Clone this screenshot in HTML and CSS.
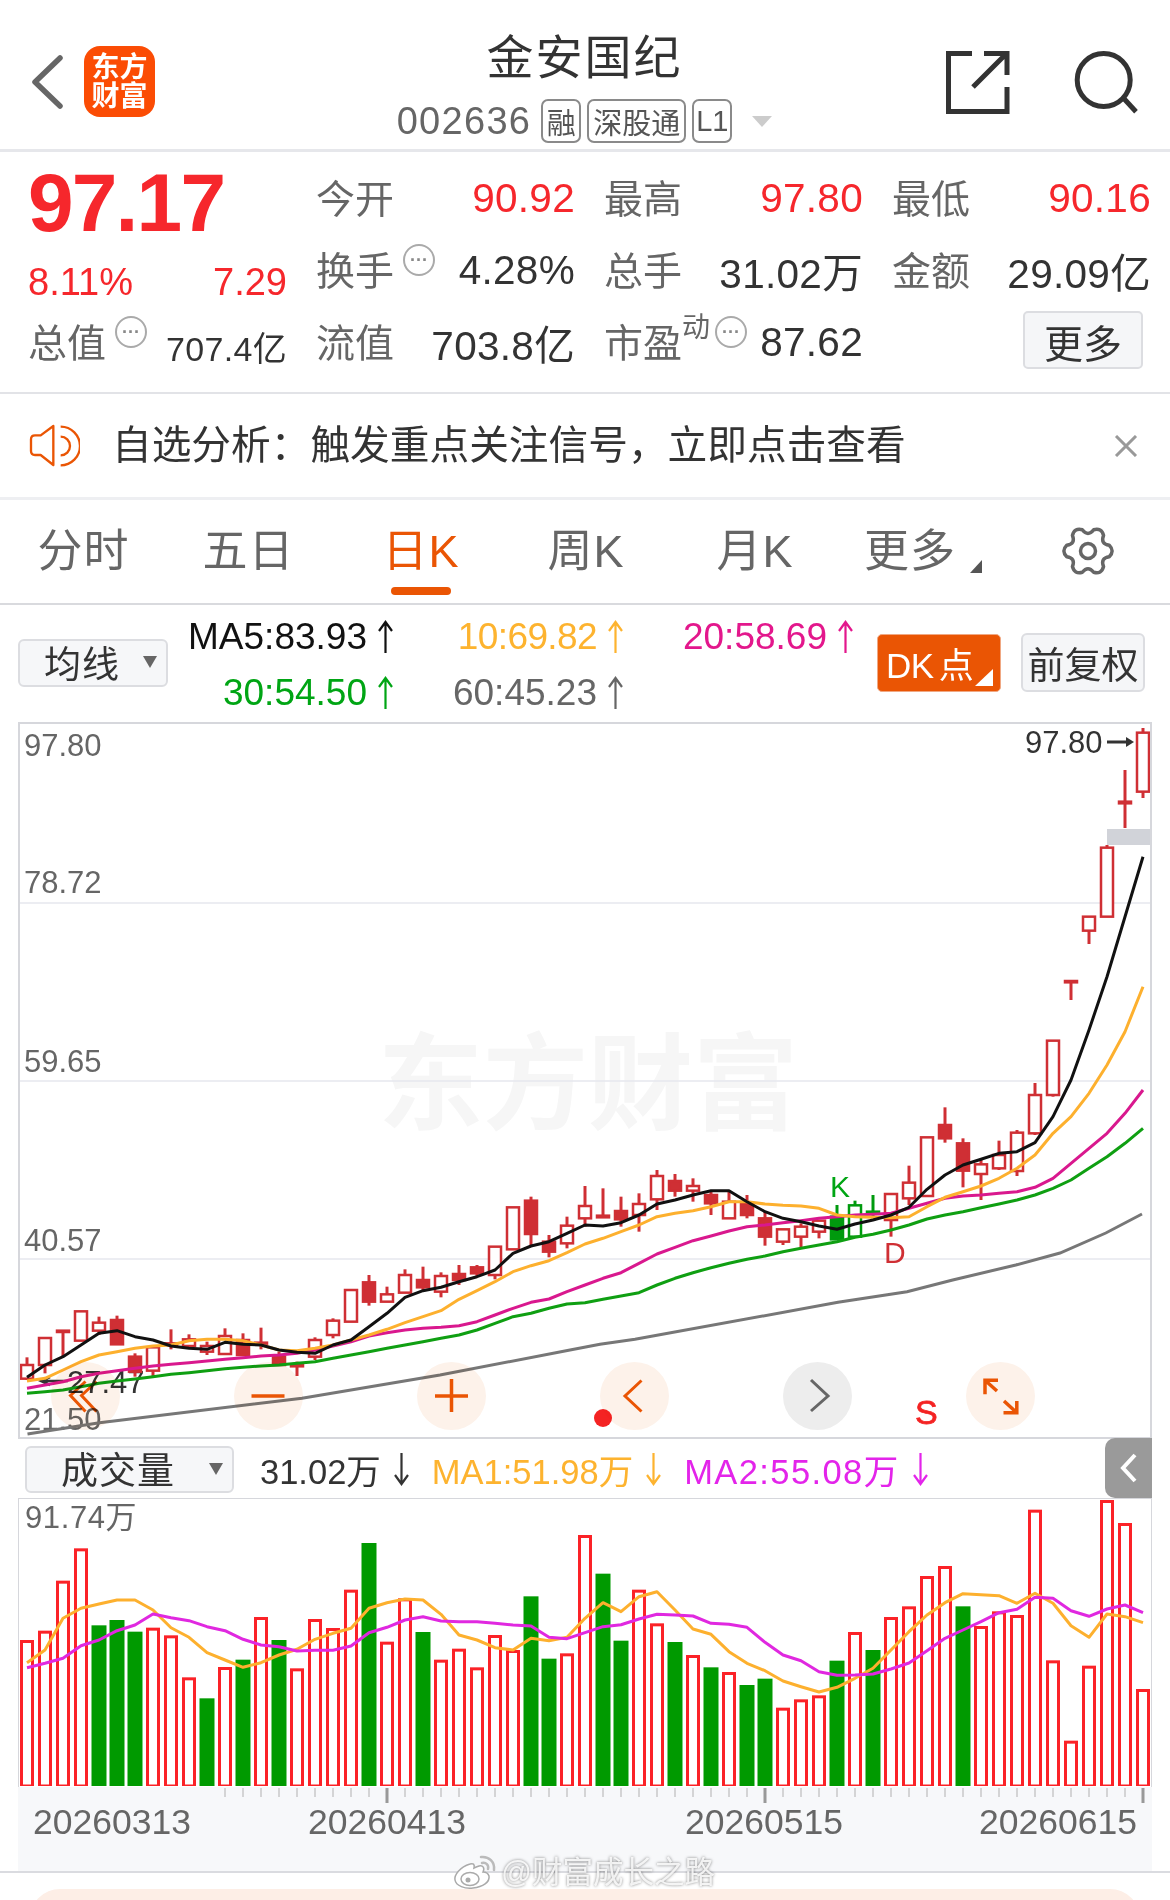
FILE: index.html
```html
<!DOCTYPE html>
<html lang="zh-CN">
<head>
<meta charset="UTF-8">
<title>金安国纪 002636</title>
<link rel="stylesheet" href="styles.css">
</head>
<body>
<svg class="defs" width="0" height="0">
    <symbol id="arrow-up" viewBox="0 0 17 34">
        <path d="M8.5 33V2M2 11L8.5 2L15 11" fill="none" stroke="currentColor" stroke-width="2.2"/>
    </symbol>
</svg>

<header class="top-bar">
    <div class="top-left">
        <svg class="back-icon" width="34" height="56" viewBox="0 0 34 56">
            <path d="M29 4L4 28L29 52" fill="none" stroke="#666" stroke-width="5.5" stroke-linecap="round" stroke-linejoin="round"/>
        </svg>
        <div class="logo"><span>东方</span><span>财富</span></div>
    </div>
    <div class="top-center">
        <h1 class="stock-name">金安国纪</h1>
        <div class="stock-sub">
            <span class="stock-code">002636</span>
            <span class="tag">融</span>
            <span class="tag tag-wide">深股通</span>
            <span class="tag">L1</span>
            <span class="sub-caret"></span>
        </div>
    </div>
    <div class="top-right">
        <svg width="64" height="64" viewBox="0 0 64 64">
            <path d="M26 2.5H2.5V60.5H61V36M38 2.5H61V24M27 36L60 3" fill="none" stroke="#333" stroke-width="5"/>
        </svg>
        <svg width="64" height="64" viewBox="0 0 64 64">
            <circle cx="29.7" cy="29" r="26.5" fill="none" stroke="#333" stroke-width="5"/>
            <path d="M48.7 46.3L62 60.7" stroke="#333" stroke-width="5"/>
        </svg>
    </div>
</header>

<section class="quote">
    <div class="cell price">97.17</div>
    <div class="cell"><span class="label">今开</span><span class="up">90.92</span></div>
    <div class="cell"><span class="label">最高</span><span class="up">97.80</span></div>
    <div class="cell"><span class="label">最低</span><span class="up">90.16</span></div>

    <div class="cell change up"><span>8.11%</span><span>7.29</span></div>
    <div class="cell"><span class="label">换手<i class="more-dot">···</i></span><span>4.28%</span></div>
    <div class="cell"><span class="label">总手</span><span>31.02万</span></div>
    <div class="cell"><span class="label">金额</span><span>29.09亿</span></div>

    <div class="cell"><span class="label">总值<i class="more-dot">···</i></span><span class="small-value">707.4亿</span></div>
    <div class="cell"><span class="label">流值</span><span>703.8亿</span></div>
    <div class="cell"><span class="label">市盈<sup>动</sup><i class="more-dot dot-tight">···</i></span><span>87.62</span></div>
    <div class="cell cell-end"><button class="more-btn">更多</button></div>
</section>

<section class="notice">
    <svg width="60" height="60" viewBox="0 0 180 180">
        <path d="M100 30L62 58H45Q33 58 33 70V105Q33 117 45 117H62L100 147Z" fill="none" stroke="#ea5504" stroke-width="7" stroke-linejoin="round"/>
        <path d="M122 62A28 28 0 0 1 122 118M122 32A58 58 0 0 1 122 148" fill="none" stroke="#ea5504" stroke-width="7"/>
    </svg>
    <p class="notice-text">自选分析：触发重点关注信号，立即点击查看</p>
    <svg class="notice-close" width="24" height="22" viewBox="0 0 24 22">
        <path d="M2 1L22 21M22 1L2 21" stroke="#999" stroke-width="3"/>
    </svg>
</section>

<nav class="tabs">
    <a class="tab">分时</a>
    <a class="tab">五日</a>
    <a class="tab active">日K</a>
    <a class="tab">周K</a>
    <a class="tab">月K</a>
    <a class="tab tab-more">更多<i class="corner"></i></a>
    <svg class="gear" width="60" height="60" viewBox="0 0 60 60">
        <path d="M51.25 35.69Q57 30 51.25 24.31Q42.12 23 45.56 14.44Q43.5 6.62 35.69 8.75Q30 16 24.31 8.75Q16.5 6.62 14.44 14.44Q17.88 23 8.75 24.31Q3 30 8.75 35.69Q17.88 37 14.44 45.56Q16.5 53.38 24.31 51.25Q30 44 35.69 51.25Q43.5 53.38 45.56 45.56Q42.12 37 51.25 35.69Z" fill="none" stroke="#666" stroke-width="3.5" stroke-linejoin="round"/>
        <circle cx="30" cy="30" r="7.5" fill="none" stroke="#666" stroke-width="3.5"/>
    </svg>
</nav>

<section class="ma-row">
    <div class="select select-ma">均线<i class="caret"></i></div>
    <div class="ma-grid">
        <span class="ma c-black">MA5:83.93<svg class="arrow"><use href="#arrow-up"/></svg></span>
        <span class="ma c-orange">10:69.82<svg class="arrow"><use href="#arrow-up"/></svg></span>
        <span class="ma c-pink">20:58.69<svg class="arrow"><use href="#arrow-up"/></svg></span>
        <span class="ma c-green">30:54.50<svg class="arrow"><use href="#arrow-up"/></svg></span>
        <span class="ma c-grey">60:45.23<svg class="arrow"><use href="#arrow-up"/></svg></span>
    </div>
    <button class="dk-btn">DK 点<i class="dk-corner"></i></button>
    <button class="adjust-btn">前复权</button>
</section>

<section class="price-chart">
    <svg id="priceSvg" width="1130" height="713" viewBox="20 724 1130 713">
        <text class="watermark" x="378" y="1121">东方财富</text>
        <path d="M20 903H1150M20 1081H1150M20 1259H1150" stroke="#e6e8ee" stroke-width="1.5"/>
        <g class="axis-text">
            <text x="24" y="756">97.80</text>
            <text x="24" y="893">78.72</text>
            <text x="24" y="1072">59.65</text>
            <text x="24" y="1251">40.57</text>
            <text x="24" y="1430">21.50</text>
        </g>
        <g class="mark-low">
            <path d="M68 1381H42M50 1377L41 1381L50 1385" fill="none" stroke="#333" stroke-width="2.5"/>
            <text x="67" y="1393">27.47</text>
        </g>
        <g id="priceMarks">
            <rect x="1107" y="829" width="44" height="16" fill="#d1d3d9"/>
            <g class="mark-high">
                <text x="1025" y="753">97.80</text>
                <path d="M1107 742H1128" stroke="#333" stroke-width="3"/>
                <path d="M1126 737L1134 742L1126 747Z" fill="#333"/>
            </g>
            <text class="mark-k" x="830" y="1197">K</text>
            <text class="mark-d" x="884" y="1263">D</text>
            <text class="mark-s" x="915" y="1424">S</text>
            <circle cx="603" cy="1418" r="9" fill="#f42323"/>
        </g>
    </svg>
    <div class="chart-controls">
        <div class="round-btn">
            <svg width="69" height="68" viewBox="0 0 69 68"><path d="M34.5 19.5L19.5 33.5L34.5 49.5M45.5 19.5L30.5 33.5L45.5 49.5" fill="none" stroke="#ea5504" stroke-width="3"/></svg>
        </div>
        <div class="round-btn">
            <svg width="69" height="68" viewBox="0 0 69 68"><path d="M17.5 34H50.5" stroke="#ea5504" stroke-width="3.5"/></svg>
        </div>
        <div class="round-btn">
            <svg width="69" height="68" viewBox="0 0 69 68"><path d="M18 34H51M34.5 17V50" stroke="#ea5504" stroke-width="3.5"/></svg>
        </div>
        <div class="round-btn">
            <svg width="69" height="68" viewBox="0 0 69 68"><path d="M41.5 18.5L25 34L41.5 49.5" fill="none" stroke="#ea5504" stroke-width="3"/></svg>
        </div>
        <div class="round-btn round-grey">
            <svg width="69" height="68" viewBox="0 0 69 68"><path d="M28 18L45 34L28 49" fill="none" stroke="#666" stroke-width="3"/></svg>
        </div>
        <div class="round-btn">
            <svg width="69" height="68" viewBox="0 0 69 68"><path d="M32 18.3H19V32.3M19 18.3L31 29M37.5 50.7H50.8V39M50.8 50.7L38 39" fill="none" stroke="#ea5504" stroke-width="3.5"/></svg>
        </div>
    </div>
</section>

<section class="vol-row">
    <div class="select select-vol">成交量<i class="caret"></i></div>
    <span class="vol-item c-dark">31.02万<svg class="arrow arrow-down"><use href="#arrow-up"/></svg></span>
    <span class="vol-item c-orange">MA1:51.98万<svg class="arrow arrow-down"><use href="#arrow-up"/></svg></span>
    <span class="vol-item vol-wide c-purple">MA2:55.08万<svg class="arrow arrow-down"><use href="#arrow-up"/></svg></span>
    <div class="collapse-tab">
        <svg width="18" height="32" viewBox="0 0 18 32"><path d="M15 3L3 16L15 29" fill="none" stroke="#fff" stroke-width="4"/></svg>
    </div>
</section>

<section class="vol-chart">
    <svg id="volSvg" width="1132" height="287" viewBox="19 1499 1132 287">
        <text class="axis-text vol-label" x="25" y="1528">91.74万</text>
    </svg>
</section>

<div class="date-row">
    <svg id="dateSvg" class="date-axis" width="1134" height="84" viewBox="18 1786 1134 84">
        <g class="date-text">
            <text x="112" y="1833">20260313</text>
            <text x="387" y="1833">20260413</text>
            <text x="764" y="1833">20260515</text>
            <text x="1058" y="1833">20260615</text>
        </g>
    </svg>
</div>

<div class="promo"></div>

<div class="weibo-mark">
    <svg width="46" height="36" viewBox="0 0 46 36">
        <path d="M18 10C8 13 2 21 3 26C4 32 13 35 21 34C31 33 38 28 37 22C36 19 33 18 31 18C33 14 31 11 27 12C24 13 22 14 22 14C23 10 21 9 18 10Z" fill="#fff" stroke="#aaa" stroke-width="1.5"/>
        <ellipse cx="18" cy="25" rx="9" ry="6.5" fill="none" stroke="#aaa" stroke-width="1.5"/>
        <circle cx="16" cy="26" r="2.5" fill="#aaa"/>
        <path d="M29 3C37 2 43 8 42 16M30 9C34 8 37 11 36 15" fill="none" stroke="#bbb" stroke-width="2.5" stroke-linecap="round"/>
    </svg>
    <span>@财富成长之路</span>
</div>

<script src="chart.js"></script>
</body>
</html>
```

FILE: styles.css
```css
* {
    box-sizing: border-box;
}
html, body {
    margin: 0;
    padding: 0;
    overflow: hidden;
}
body {
    position: relative;
    width: 1170px;
    height: 1900px;
    background: #fff;
    color: #333;
    font-family: "Liberation Sans", "Noto Sans CJK SC", sans-serif;
}
.defs {
    position: absolute;
}
button {
    font-family: inherit;
    padding: 0;
}
i {
    font-style: normal;
}

/* top bar */
.top-bar {
    display: grid;
    grid-template-columns: 1fr auto 1fr;
    height: 152px;
    padding: 0 32px 0 31px;
    border-bottom: 3px solid #e6e7eb;
}
.top-left {
    display: flex;
    align-items: center;
    height: 163px;
}
.back-icon {
    margin-right: 19px;
}
.logo {
    display: flex;
    flex-direction: column;
    align-items: center;
    justify-content: center;
    width: 71px;
    height: 71px;
    border-radius: 16px;
    background: #fb4c04;
    color: #fff;
    font-size: 28px;
    font-weight: bold;
    line-height: 29px;
}
.top-center {
    padding-top: 30px;
    text-align: center;
}
.stock-name {
    margin: 0;
    font-size: 47px;
    font-weight: normal;
    line-height: 56px;
    letter-spacing: 2px;
}
.stock-sub {
    display: flex;
    align-items: center;
    gap: 6px;
    height: 44px;
    margin-top: 13px;
}
.stock-code {
    margin-right: 4px;
    color: #666;
    font-size: 38px;
    letter-spacing: 1.3px;
}
.tag {
    display: flex;
    align-items: center;
    justify-content: center;
    width: 40px;
    height: 44px;
    border: 2px solid #8a8a8a;
    border-radius: 7px;
    color: #555;
    font-size: 29px;
}
.tag-wide {
    width: 99px;
}
.sub-caret {
    width: 0;
    height: 0;
    margin-left: 14px;
    border-top: 11px solid #ccc;
    border-left: 10px solid transparent;
    border-right: 10px solid transparent;
}
.top-right {
    display: flex;
    justify-content: flex-end;
    gap: 64px;
    padding-top: 51px;
}
.top-right svg {
    display: block;
}

/* quote block */
.quote {
    display: grid;
    grid-template-columns: repeat(4, 259px);
    grid-auto-rows: 72px;
    column-gap: 29px;
    height: 242px;
    padding: 10px 0 0 28px;
    border-bottom: 2px solid #e2e3e7;
    font-size: 40.5px;
    letter-spacing: 0.3px;
}
.cell {
    display: flex;
    align-items: center;
    justify-content: space-between;
    white-space: nowrap;
}
.cell-end {
    justify-content: flex-end;
}
.label {
    display: flex;
    align-items: center;
    margin-bottom: 4px;
    color: #666;
    font-size: 39px;
    letter-spacing: 0;
}
.label sup {
    align-self: flex-start;
    margin-top: 1px;
    font-size: 28px;
    line-height: 30px;
}
.up {
    color: #f6272c;
}
.price {
    padding-top: 9px;
    color: #f6272c;
    font-size: 82px;
    font-weight: bold;
    letter-spacing: -1.8px;
}
.change {
    padding-top: 24px;
    font-size: 38px;
    letter-spacing: 0;
}
.more-dot {
    display: flex;
    align-items: center;
    justify-content: center;
    align-self: flex-start;
    width: 32px;
    height: 32px;
    margin: 4px 0 0 9px;
    border: 2px solid #aaa;
    border-radius: 50%;
    color: #888;
    font-size: 18px;
    font-weight: bold;
    line-height: 1;
}
.dot-tight {
    margin-left: 5px;
}
.small-value {
    padding-top: 8px;
    font-size: 34px;
}
.more-btn {
    width: 120px;
    height: 58px;
    margin: 0 8px 4px 0;
    border: 2px solid #dcdde1;
    border-radius: 5px;
    background: #f5f6f8;
    color: #333;
    font-size: 39px;
}

/* notice */
.notice {
    display: flex;
    align-items: center;
    height: 106px;
    padding: 0 32px 0 20px;
    border-bottom: 3px solid #eeeff2;
}
.notice-text {
    flex: 1;
    margin: 0 0 8px 32px;
    font-size: 39.7px;
}

/* tabs */
.tabs {
    display: grid;
    grid-template-columns: 167px 163px 182px 148px 190px 120px 1fr;
    height: 105px;
    border-bottom: 2px solid #d9dade;
    font-size: 45px;
}
.tab {
    padding-top: 22px;
    color: #666;
    line-height: 60px;
    text-align: center;
    letter-spacing: 1px;
}
.tab.active {
    color: #ea5504;
}
.tab.active::after {
    content: "";
    display: block;
    width: 60px;
    height: 8px;
    margin: 5px auto 0;
    border-radius: 4px;
    background: #ea5504;
}
.tab-more {
    position: relative;
}
.corner {
    position: absolute;
    top: 60px;
    left: 120px;
    width: 0;
    height: 0;
    border-bottom: 13px solid #555;
    border-left: 12px solid transparent;
}
.gear {
    margin: 21px 0 0 88px;
}

/* moving averages */
.ma-row {
    display: flex;
    align-items: center;
    height: 117px;
    padding: 0 0 2px 18px;
}
.select {
    position: relative;
    flex: none;
    border: 2px solid #dcdde1;
    border-radius: 6px;
    background: #f6f7f9;
    font-size: 37px;
    letter-spacing: 1px;
}
.select-ma {
    width: 150px;
    height: 48px;
    padding-left: 24px;
    line-height: 49px;
}
.caret {
    position: absolute;
    top: 15px;
    right: 9px;
    width: 0;
    height: 0;
    border-top: 12px solid #666;
    border-left: 7px solid transparent;
    border-right: 7px solid transparent;
}
.ma-grid {
    display: grid;
    grid-template-columns: 226px 230px 230px;
    grid-auto-rows: 56px;
    width: 686px;
    margin-top: 5px;
    font-size: 37px;
}
.ma-grid .ma:nth-child(4) {
    grid-column: 1;
}
.ma {
    display: flex;
    align-items: center;
    justify-content: flex-end;
    gap: 10px;
}
.ma.c-orange {
    letter-spacing: -0.6px;
}
.arrow {
    flex: none;
    width: 17px;
    height: 34px;
}
.arrow-down {
    transform: rotate(180deg);
}
.c-black { color: #111; }
.c-orange { color: #fdb32f; }
.c-pink { color: #e3178c; }
.c-green { color: #00a514; }
.c-grey { color: #666; }
.c-dark { color: #333; }
.c-purple { color: #e324ea; }
.dk-btn {
    position: relative;
    width: 124px;
    height: 58px;
    margin-left: 23px;
    padding: 0 0 0 8px;
    border: 1px solid #f0a883;
    border-radius: 5px;
    background: #ea5504;
    color: #fff;
    font-size: 35px;
    letter-spacing: -0.5px;
    word-spacing: -4px;
    text-align: left;
}
.dk-corner {
    position: absolute;
    right: 7px;
    bottom: 5px;
    width: 0;
    height: 0;
    border-bottom: 17px solid #fff;
    border-left: 18px solid transparent;
}
.adjust-btn {
    width: 124px;
    height: 59px;
    margin-left: 20px;
    border: 2px solid #dcdde1;
    border-radius: 6px;
    background: #f5f6f8;
    color: #333;
    font-size: 37px;
}

/* price chart */
.price-chart {
    position: relative;
    width: 1134px;
    height: 717px;
    margin-left: 18px;
    border: 2px solid #d6d7dc;
}
.price-chart svg {
    display: block;
}
.price-chart svg text {
    font-size: 31px;
}
.price-chart .watermark {
    fill: #f6f6f6;
    font-size: 105px;
    font-weight: bold;
}
.axis-text text,
text.axis-text {
    fill: #666;
}
.vol-label {
    font-size: 31px;
    letter-spacing: 0.6px;
}
.mark-low text {
    fill: #333;
}
.mark-high text {
    fill: #333;
}
.price-chart .mark-k,
.price-chart .mark-d {
    font-size: 30px;
}
.mark-k {
    fill: #00a514;
}
.mark-d {
    fill: #cf2f34;
}
.price-chart .mark-s {
    fill: #f42323;
    stroke: #f42323;
    stroke-width: 0.8px;
    font-size: 34px;
}
.chart-controls {
    position: absolute;
    top: 638px;
    left: 31px;
    display: flex;
    gap: 114px;
}
.round-btn {
    width: 69px;
    height: 68px;
    border-radius: 50%;
    background: #fdf2ea;
    mix-blend-mode: multiply;
}
.round-grey {
    background: #ededed;
}

/* volume */
.vol-row {
    position: relative;
    display: flex;
    align-items: center;
    gap: 22px;
    height: 59px;
    padding: 1px 0 0 25px;
    font-size: 34.5px;
}
.select-vol {
    width: 209px;
    height: 47px;
    margin-right: 4px;
    padding-left: 34px;
    line-height: 47px;
}
.vol-item {
    display: flex;
    align-items: center;
    gap: 12px;
}
.vol-wide {
    letter-spacing: 1.4px;
}
.collapse-tab {
    position: absolute;
    top: -1px;
    left: 1105px;
    display: flex;
    align-items: center;
    justify-content: center;
    width: 47px;
    height: 60px;
    border-radius: 10px 0 0 10px;
    background: #9a9a9a;
}
.vol-chart {
    width: 1134px;
    height: 289px;
    margin-left: 18px;
    border: 1px solid #d6d7dc;
    border-bottom: none;
}
.vol-chart svg,
.date-axis {
    display: block;
}
.date-row {
    height: 86px;
    padding-left: 18px;
    border-bottom: 2px solid #dadbe0;
}
.date-axis {
    background: #f7f8fa;
}
.date-text text {
    fill: #666;
    font-size: 35.5px;
    text-anchor: middle;
}

/* bottom */
.promo {
    height: 40px;
    margin: 16px 30px 0;
    border-radius: 30px 30px 0 0;
    background: #fdeee6;
}
.weibo-mark {
    position: absolute;
    top: 1854px;
    left: 452px;
    display: flex;
    align-items: center;
    gap: 3px;
    color: rgba(255, 255, 255, 0.85);
    font-size: 30.5px;
    line-height: 36px;
    text-shadow: 0 0 3px rgba(0, 0, 0, 0.5);
}
```

FILE: chart.js
```js
// all y values are in thirds of a pixel: price from y=1100, volume from y=1480
var SVGNS = 'http://www.w3.org/2000/svg';
var RED = '#cf2f34';
var GREEN = '#009a0e';
var VOL_RED = '#fb2227';

function priceY(v) { return 1100 + v / 3; }
function volY(v) { return 1480 + v / 3; }
function centerX(i) { return 27 + 18 * i; }

function add(parent, name, attrs) {
    var el = document.createElementNS(SVGNS, name);
    for (var k in attrs) el.setAttribute(k, attrs[k]);
    parent.appendChild(el);
    return el;
}

// wick top, body top, body bottom, wick bottom, kind (h hollow, s solid, g green)
var candles = [
    [772,795,836,840,'h'],[714,714,795,820,'h'],[692,692,696,770,'s'],[634,634,722,722,'h'],
    [650,668,692,705,'h'],[647,660,733,733,'s'],[760,770,815,830,'s'],[742,742,812,828,'h'],
    [688,730,735,748,'s'],[703,718,738,740,'h'],[725,738,755,765,'h'],[685,708,762,762,'h'],
    [700,720,765,765,'s'],[683,728,731,748,'s'],[755,770,795,795,'s'],[785,795,799,828,'s'],
    [712,720,770,780,'h'],[655,662,705,715,'h'],[570,570,665,665,'h'],[525,547,605,617,'s'],
    [560,583,605,605,'h'],[508,525,578,578,'h'],[500,540,562,575,'s'],[517,528,575,592,'h'],
    [495,522,540,555,'s'],[495,502,520,530,'s'],[440,440,525,538,'h'],[322,322,448,448,'h'],
    [290,302,402,440,'s'],[405,425,455,472,'s'],[350,377,430,445,'h'],[258,318,355,380,'h'],
    [265,347,352,352,'s'],[290,333,358,380,'s'],[280,312,345,395,'h'],[210,228,298,330,'h'],
    [222,243,272,290,'s'],[235,258,272,305,'h'],[270,285,310,345,'s'],[275,305,355,355,'h'],
    [285,310,345,355,'s'],[335,355,410,437,'s'],[388,388,425,435,'h'],[370,380,410,442,'h'],
    [362,362,395,415,'h'],[315,350,418,418,'gs'],[302,316,410,410,'gh'],[285,335,340,355,'gs'],
    [282,282,360,410,'h'],[197,248,295,315,'h'],[112,112,288,288,'h'],[22,75,115,128,'s'],
    [115,130,212,262,'s'],[180,193,222,300,'h'],[122,165,205,210,'h'],[90,98,213,228,'h'],
    [-51,-15,100,105,'h'],[-178,-178,-15,-10,'h'],[-357,-357,-353,-300,'s'],[-550,-550,-508,-468,'h'],
    [-765,-757,-550,-550,'h'],[-990,-895,-890,-816,'s'],[-1116,-1102,-925,-906,'h']
];

var ma5 = [832,795,770,735,700,692,710,720,738,745,748,727,733,735,750,757,760,735,720,680,640,592,572,562,545,530,510,460,438,425,400,375,
    378,368,345,312,300,285,272,272,305,335,355,365,378,388,372,360,345,322,268,225,195,178,160,155,128,50,-60,-210,-370,-550,-730];
var ma10 = [843,835,810,785,765,755,745,738,735,722,718,718,722,735,750,752,745,735,720,705,688,668,650,632,598,572,545,515,497,482,458,432,
    415,395,375,350,340,332,320,305,305,312,316,318,325,345,350,352,353,350,320,292,275,258,235,205,165,100,50,-20,-105,-205,-340];
var ma20 = [865,855,845,830,820,812,805,798,793,788,783,778,773,768,765,760,750,738,725,708,698,690,685,682,677,665,645,625,607,597,575,555,
    535,518,490,462,442,422,408,393,380,375,368,362,355,350,345,343,340,325,310,295,288,285,280,275,262,235,190,145,100,40,-30];
var ma30 = [880,875,870,860,850,843,837,830,823,818,812,806,802,798,795,790,785,775,765,755,745,735,725,715,705,690,670,650,640,625,612,608,
    598,588,578,555,535,518,503,490,478,468,455,445,435,425,412,403,390,375,357,345,335,323,312,300,285,265,240,205,170,130,85];
var ma60 = '27.5,1434 99.5,1422.7 302,1398.3 440,1375 570,1350 600,1344.3 635,1339.3 838,1302.3 907,1291.7 952.7,1280 1015.8,1265 1060,1253 1105.8,1233 1142,1214';

// top of each volume bar, g marks a green one
var volumes = [480,452,302,205,'g436','g420','g455',443,466,592,'g655',561,'g539',411,'g480',565,417,444,329,'g189',485,355,'g456',539,506,562,465,510,'g349','g536',520,165,
    'g281','g482',329,430,'g486',525,'g562',576,'g615','g596',683,658,646,'g542',456,'g510',411,379,288,258,'g379',438,394,405,89,541,782,557,60,129,627];
var volMa1 = [548,510,415,385,372,360,360,390,443,472,518,540,562,548,525,508,478,460,445,385,368,357,360,403,465,480,503,510,475,482,472,415,
    368,395,350,335,390,447,463,515,550,572,603,620,636,622,595,565,510,455,405,368,341,344,347,370,340,370,437,472,402,410,428];
var volMa2 = [563,550,535,497,480,452,435,402,413,422,440,452,478,495,500,513,511,511,498,458,442,420,410,423,425,425,430,435,438,472,476,458,
    440,434,417,403,405,408,430,433,442,487,525,542,575,586,585,582,567,549,512,475,450,425,398,388,352,355,392,409,387,375,398];

function drawLine(parent, values, toY, color) {
    var pts = values.map(function (v, i) { return centerX(i) + ',' + toY(v).toFixed(1); });
    add(parent, 'polyline', {
        points: pts.join(' '), fill: 'none', stroke: color,
        'stroke-width': 3, 'stroke-linejoin': 'round'
    });
}

function drawCandles(svg, marks) {
    var layer = document.createElementNS(SVGNS, 'g');
    svg.insertBefore(layer, marks);
    candles.forEach(function (c, i) {
        var x = centerX(i);
        var color = c[4].charAt(0) === 'g' ? GREEN : RED;
        var solid = c[4].indexOf('s') >= 0;
        add(layer, 'line', { x1: x, x2: x, y1: priceY(c[0]), y2: priceY(c[3]), stroke: color, 'stroke-width': 3 });
        add(layer, 'rect', {
            x: x - 6, y: priceY(c[1]), width: 12, height: priceY(c[2]) - priceY(c[1]),
            fill: solid ? color : '#fff', stroke: color, 'stroke-width': 2.5
        });
    });
    add(layer, 'polyline', { points: ma60, fill: 'none', stroke: '#777', 'stroke-width': 3 });
    drawLine(layer, ma30, priceY, '#0f9f12');
    drawLine(layer, ma20, priceY, '#d9188e');
    drawLine(layer, ma10, priceY, '#fdb02e');
    drawLine(layer, ma5, priceY, '#111');
}

function drawVolumes(svg) {
    volumes.forEach(function (v, i) {
        var x = centerX(i);
        var green = typeof v === 'string';
        var top = volY(green ? parseFloat(v.slice(1)) : v);
        if (green) {
            add(svg, 'rect', { x: x - 7.5, y: top, width: 15, height: 1786 - top, fill: '#009a00' });
        } else {
            add(svg, 'rect', {
                x: x - 5.5, y: top + 1.5, width: 11, height: 1784.5 - top,
                fill: '#fff', stroke: VOL_RED, 'stroke-width': 3
            });
        }
    });
    drawLine(svg, volMa1, volY, '#fdb02e');
    drawLine(svg, volMa2, volY, '#e028e0');
}

function drawTicks(svg) {
    for (var i = 11; i < 63; i++) {
        var major = i === 20 || i === 41 || i === 62;
        add(svg, 'line', {
            x1: centerX(i), x2: centerX(i), y1: 1787, y2: major ? 1802 : 1796,
            stroke: major ? '#999' : '#c9c9c9', 'stroke-width': major ? 3 : 1.5
        });
    }
}

drawCandles(document.getElementById('priceSvg'), document.getElementById('priceMarks'));
drawVolumes(document.getElementById('volSvg'));
drawTicks(document.getElementById('dateSvg'));
```
